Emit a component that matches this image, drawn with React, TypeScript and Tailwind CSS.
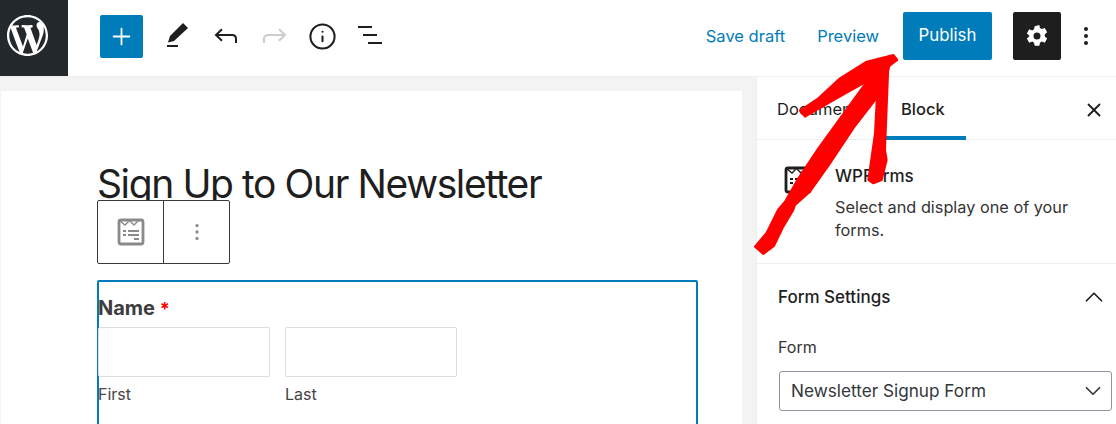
import React from 'react';
import { Plus, Info, X, ChevronUp, ChevronDown, EllipsisVertical } from 'lucide-react';

const WpLogo = () => (
  <svg viewBox="0 0 20 20" className="w-[41px] h-[41px]" fill="#fff">
    <path d="M20 10c0-5.51-4.49-10-10-10C4.480 0 0 4.490 0 10c0 5.520 4.480 10 10 10 5.510 0 10-4.480 10-10zM7.780 15.370L4.370 6.220c.550-.020 1.170-.080 1.170-.080.500-.060.440-1.130-.060-1.110 0 0-1.450.110-2.370.110-.180 0-.370 0-.580-.010C4.120 2.690 6.870 1.110 10 1.110c2.330 0 4.450.870 6.050 2.340-.680-.110-1.650.390-1.650 1.580 0 .740.450 1.360.900 2.100.350.610.550 1.360.550 2.460 0 1.490-1.400 5-1.400 5l-3.030-8.370c.540-.020.820-.170.820-.170.500-.050.440-1.250-.060-1.220 0 0-1.440.120-2.380.120-.870 0-2.330-.120-2.330-.120-.500-.030-.560 1.200-.060 1.220l.920.080 1.260 3.410zM17.410 10c.240-.640.740-1.870.430-4.250.700 1.290 1.050 2.710 1.050 4.250 0 3.290-1.730 6.240-4.400 7.780.970-2.590 1.940-5.200 2.920-7.780zM6.100 18.090C3.120 16.650 1.110 13.530 1.110 10c0-1.300.230-2.480.720-3.590C3.250 10.300 4.670 14.200 6.100 18.090zm4.030-6.630l2.580 6.980c-.860.290-1.760.450-2.710.450-.790 0-1.570-.110-2.290-.330.810-2.380 1.620-4.740 2.420-7.100z" />
  </svg>
);

const FormIcon = ({ className }: { className: string }) => (
  <svg viewBox="0 0 28 28" className={className} fill="none" stroke="currentColor">
    <rect x="2" y="2" width="24" height="24" rx="2" strokeWidth="2.8" />
    <path d="M3 3l5 4 4-4M13 3l4 4 4-4" strokeWidth="1.4" />
    <path d="M6 13h3M11 13h11M6 17h3M11 17h11M17 21h5" strokeWidth="1.8" />
  </svg>
);

const App: React.FC = () => {
  return (
    <div className="relative w-[1116px] h-[424px] overflow-hidden bg-white text-[#1e1e1e] font-['Inter',sans-serif]">
      {/* top toolbar */}
      <header className="h-[77px] flex bg-white border-b border-[#eeeeee]">
        <div className="w-[68px] h-[76px] bg-[#23282d] pl-[7px] pt-[15px] shrink-0">
          <WpLogo />
        </div>
        <div className="flex-1 h-[72px] flex items-center">
          <div className="ml-8 w-[43px] h-[43px] rounded-[2px] bg-[#007cba] flex items-center justify-center text-white">
            <Plus size={27} strokeWidth={1.6} />
          </div>
          <svg viewBox="0 0 28 28" className="ml-[21px] w-7 h-7" fill="#1e1e1e">
            <path d="M19 1l5 5-14 13-6 1.500 2-6.500z" />
            <path d="M3 23h11v2H3z" />
          </svg>
          <svg viewBox="0 0 28 28" className="ml-[20px] w-7 h-7" fill="none" stroke="#1e1e1e" strokeWidth="2">
            <path d="M10 7.300L4 13l6 5.700M4 13h16q4 0 4 4v4" />
          </svg>
          <svg viewBox="0 0 28 28" className="ml-[20px] w-7 h-7" fill="none" stroke="#cccccc" strokeWidth="2">
            <path d="M19 7.300L25 13l-6 5.700M25 13H9q-5 0-5 4v4" />
          </svg>
          <div className="ml-[20px] text-[#1e1e1e]">
            <Info size={29} strokeWidth={1.7} />
          </div>
          <svg viewBox="0 0 28 28" className="ml-[21px] w-7 h-7" stroke="#1e1e1e" strokeWidth="2">
            <path d="M0 5h14M5 13h14M10 21h14" />
          </svg>
          <div className="ml-auto flex items-center text-[#007cba] text-[16.5px]">
            <span>Save draft</span>
            <span className="ml-8">Preview</span>
          </div>
          <div className="ml-6 w-[89px] h-12 rounded-[2px] bg-[#007cba] text-white text-[16.8px] flex items-center justify-center">
            Publish
          </div>
          <div className="ml-[21px] w-12 h-12 rounded-[2px] bg-[#1e1e1e] flex items-center justify-center">
            <svg viewBox="0 0 20 20" className="w-[26px] h-[26px]" fill="#fff">
              <path fillRule="evenodd" d="M11.800 1.500l.500 2.400 1.400.8 2.300-.8 1.800 3.200-1.800 1.600v1.600l1.800 1.600-1.800 3.200-2.300-.8-1.400.8-.5 2.400H8.200l-.5-2.400-1.400-.8-2.300.8-1.800-3.200 1.800-1.600V9.700L2.200 8.100 4 4.900l2.300.8 1.400-.8.500-2.400zM10 7.300a2.700 2.700 0 1 0 0 5.400 2.700 2.700 0 0 0 0-5.400z" />
            </svg>
          </div>
          <div className="ml-[13px] mr-[18px] text-[#1e1e1e]">
            <EllipsisVertical size={24} strokeWidth={2} />
          </div>
        </div>
      </header>

      <div className="flex h-[347px] bg-[#f3f3f3]">
        {/* editor canvas */}
        <main className="ml-px mt-[14px] w-[741px] bg-white pl-[96px] pt-[68px] shrink-0">
          <h1 className="text-[39px] leading-[50px] text-[#1e1e1e] tracking-[-1.4px]">Sign Up to Our Newsletter</h1>
          <div className="flex w-[133px] h-[64px] -mt-[9px] rounded-[2px] border border-[#3a3a3a] bg-white relative">
            <div className="w-[66px] flex items-center justify-center border-r border-[#3a3a3a] text-[#8a8a8a]">
              <FormIcon className="w-7 h-7" />
            </div>
            <div className="flex-1 flex items-center justify-center text-[#8a8a8a]">
              <EllipsisVertical size={22} strokeWidth={1.6} />
            </div>
          </div>
          <div className="mt-4 w-[601px] h-[200px] rounded-[2px] border-2 border-[#007cba]">
            <div className="mt-[12px] -ml-px text-[20px] leading-[28px] font-bold text-[#3d3d3d]">
              Name <span className="text-[#ff0000] font-bold text-[18px]">*</span>
            </div>
            <div className="mt-[4px] -ml-px flex gap-[15px]">
              <div className="w-[172px]">
                <div className="h-[50px] border border-[#dddddd] rounded-[2px]" />
                <div className="mt-[7px] text-[16px] leading-[20px] text-[#444444]">First</div>
              </div>
              <div className="w-[172px]">
                <div className="h-[50px] border border-[#dddddd] rounded-[2px]" />
                <div className="mt-[7px] text-[16px] leading-[20px] text-[#444444]">Last</div>
              </div>
            </div>
          </div>
        </main>

        {/* settings sidebar */}
        <aside className="ml-[14px] flex-1 bg-white border-l border-[#eeeeee]">
          <div className="h-[63px] flex items-center border-b border-[#eeeeee] pl-5 pr-[11px] pt-[3px] text-[16.5px]">
            <span className="w-[124px]">Document</span>
            <span className="relative h-full flex items-center font-medium">
              Block
              <span className="absolute left-[-15px] bottom-[-1px] w-[80px] h-[4px] bg-[#007cba]" />
            </span>
            <X size={22} strokeWidth={2} className="ml-auto" />
          </div>
          <div className="h-[124px] flex pl-[27px] pt-[24px] border-b border-[#eeeeee]">
            <FormIcon className="w-7 h-7 mt-[2px] text-[#1e1e1e]" />
            <div className="ml-[23px] w-[262px]">
              <div className="text-[17px] leading-[24px] font-medium">WPForms</div>
              <div className="mt-[8px] text-[16.3px] leading-[23px] text-[#333333]">Select and display one of your forms.</div>
            </div>
          </div>
          <div className="pl-[21px] pr-[4px]">
            <div className="mt-[21px] flex items-center justify-between pr-[3px] text-[17px] leading-[24px] font-medium">
              <span>Form Settings</span>
              <ChevronUp size={30} strokeWidth={1.4} className="-my-1" />
            </div>
            <div className="mt-[26px] text-[16px] leading-[24px] text-[#333333]">Form</div>
            <div className="mt-[12px] ml-[1px] h-[40px] flex items-center justify-between pl-[11px] pr-[5px] rounded-[3px] border border-[#8d96a0] text-[17.2px] text-[#32373c]">
              <span>Newsletter Signup Form</span>
              <ChevronDown size={26} strokeWidth={1.6} />
            </div>
          </div>
        </aside>
      </div>

      {/* red hand-drawn arrow, coordinates taken at 3x */}
      <svg className="absolute left-0 top-0 pointer-events-none" width="1116" height="424" fill="#ff0000" stroke="#ff0000" strokeLinejoin="round">
        <g transform="translate(750 50) scale(0.3333)" strokeWidth="6">
          <path d="M15 590L50 548L85 478L105 455L145 385L205 295L285 185L370 68L420 40L415 60L395 125L312 232L237 345L180 425L135 465L130 480L100 530L72 588L40 612Z" />
          <path d="M385 60L375 250L355 390L370 400L395 390L410 330L405 300L415 50Z" />
          <path d="M150 182L205 145L270 85L350 35L430 15L442 30L415 50L340 100L260 145L165 200Z" />
        </g>
      </svg>
    </div>
  );
};

export default App;
